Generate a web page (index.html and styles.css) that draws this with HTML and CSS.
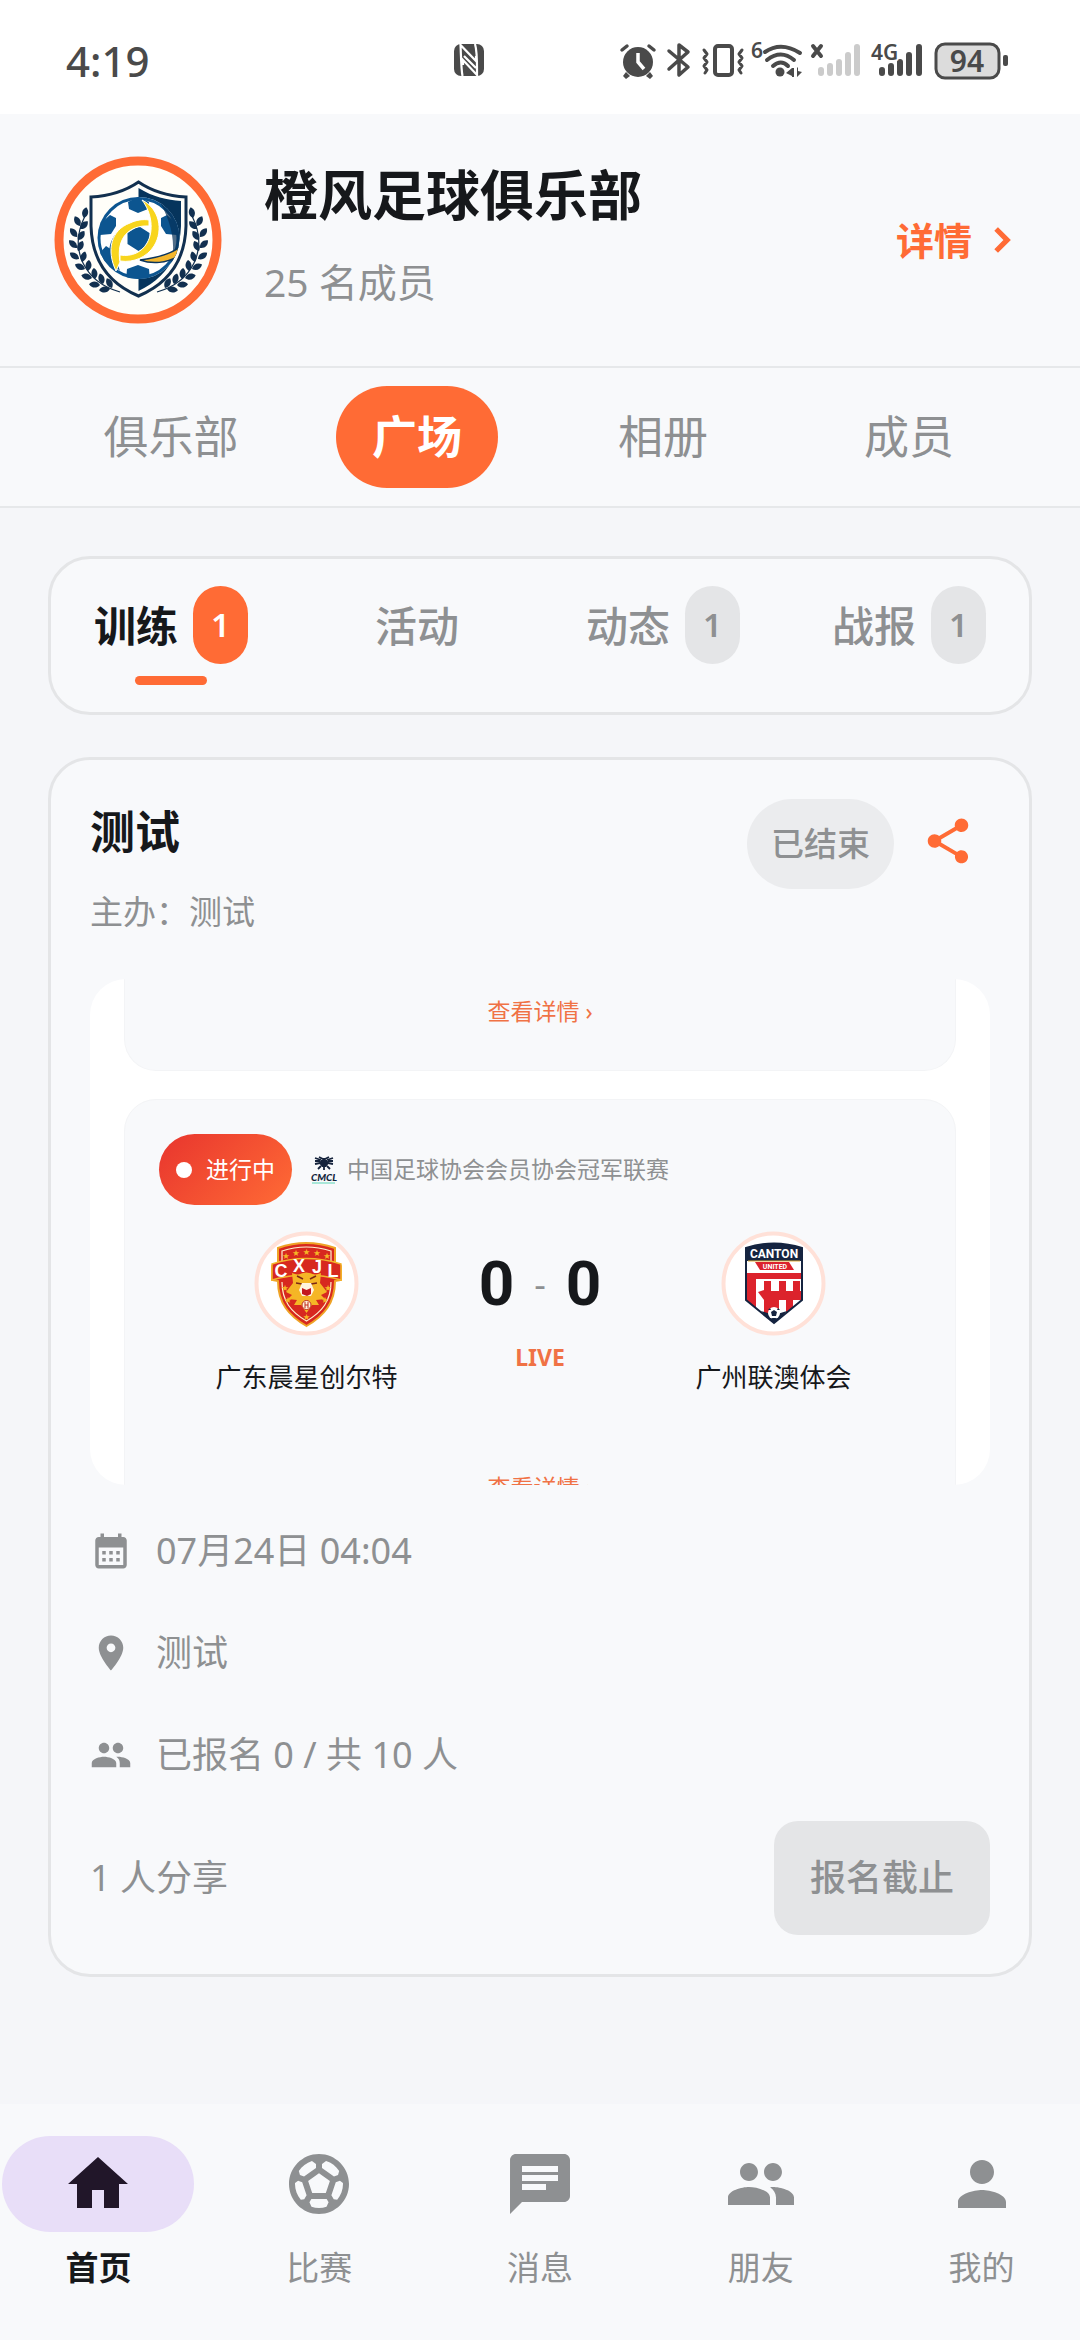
FILE: index.html
```html
<!DOCTYPE html>
<html lang="zh-CN">
<head>
    <meta charset="UTF-8">
    <meta name="viewport" content="width=device-width, initial-scale=1.0">
    <title>橙风足球俱乐部</title>
    <link rel="stylesheet" href="styles.css">
</head>
<body>
    <div class="status-bar">
        <span class="clock">4:19</span>
        <svg class="nfc" width="32" height="32" viewBox="0 0 32 32">
            <rect x="1" y="0" width="30" height="32" rx="7" fill="#4a4a4a"/>
            <path d="M9.500 32 C8 24 8 9 7.500 1 L23 17 V12 M22 0 C24.500 8 24 23 24 31 L10 16 V21 M11 12 L23 24" fill="none" stroke="#fff" stroke-width="2.200"/>
        </svg>
        <div class="status-icons">
            <svg width="392" height="40" viewBox="0 0 392 40">
                <g fill="#4a4a4a" stroke="none">
                    <circle cx="20" cy="22" r="15"/>
                    <path d="M8 32 l4 4 -4 3 -3 -3 z M32 32 l-4 4 4 3 3 -3 z"/>
                    <circle cx="162" cy="32" r="4.500"/>
                    <path d="M174 28 v8 l-6 -3 z M174 28 h2 v9 h-2 z M179 37 v-9 l1 -1 v4 l4 1 z"/>
                </g>
                <path d="M20 13 v9 l6 7" fill="none" stroke="#fff" stroke-width="3.500"/>
                <g fill="none" stroke="#4a4a4a" stroke-width="3.500" stroke-linecap="round" stroke-linejoin="round">
                    <path d="M4 10 l5 -4 M36 10 l-5 -4"/>
                    <path d="M51 11 l19 16 -9 8 V5 l9 7 -19 17"/>
                    <rect x="97" y="6" width="17" height="29" rx="3" stroke-width="4"/>
                    <path d="M86 10 l3 4 -3 4 3 4 -3 4 3 4 -2 3 M124 10 l-3 4 3 4 -3 4 3 4 -3 4 2 3" stroke-width="3"/>
                    <path d="M147 12 Q163 1 182 13 M149 20 Q163 9 176 20 M155 26 Q163 19 170 26" stroke-width="4"/>
                    <path d="M195 6 l8 10 M203 6 l-8 10" stroke-width="4"/>
                </g>
                <g stroke="#cbcbcb" stroke-width="6" stroke-linecap="round">
                    <path d="M203 30 v3 M212 26 v7 M221 22 v11 M230 15 v18 M239 7 v26"/>
                </g>
                <g stroke="#4a4a4a" stroke-width="6" stroke-linecap="round">
                    <path d="M264 30 v3 M273 26 v7 M282 22 v11 M291 15 v18 M301 7 v26"/>
                </g>
                <rect x="318" y="4" width="63" height="34" rx="9" fill="#dcdcdc" stroke="#4a4a4a" stroke-width="3"/>
                <rect x="385" y="15" width="5" height="11" rx="2" fill="#4a4a4a"/>
                <g class="status-text">
                    <text x="133" y="18" font-size="21">6</text>
                    <text x="253" y="20" font-size="21" stroke="#fff" stroke-width="3" paint-order="stroke">4G</text>
                    <text x="349" y="32" font-size="30" text-anchor="middle">94</text>
                </g>
            </svg>
        </div>
    </div>

    <header class="club">
        <svg class="club-logo" viewBox="4 6 168 168" role="img" aria-label="俱乐部徽章">
            <defs>
                <clipPath id="ballClip"><circle cx="88.500" cy="88" r="41"/></clipPath>
                <path id="leaf" d="M0 0 C-4 -3 -4 -8 0 -11 C4 -8 4 -3 0 0z"/>
                <g id="laurel" fill="#12304f">
                    <path d="M35 66 C18 100 35 132 70 142" fill="none" stroke="#12304f" stroke-width="1.200"/>
                    <use href="#leaf" transform="translate(34 68) rotate(12)"/>
                    <use href="#leaf" transform="translate(30 76) rotate(-28)"/>
                    <use href="#leaf" transform="translate(30 79) rotate(45)"/>
                    <use href="#leaf" transform="translate(27 87) rotate(-38)"/>
                    <use href="#leaf" transform="translate(28 90) rotate(35)"/>
                    <use href="#leaf" transform="translate(27 98) rotate(-46)"/>
                    <use href="#leaf" transform="translate(28 101) rotate(26)"/>
                    <use href="#leaf" transform="translate(29 109) rotate(-56)"/>
                    <use href="#leaf" transform="translate(32 112) rotate(16)"/>
                    <use href="#leaf" transform="translate(35 119) rotate(-66)"/>
                    <use href="#leaf" transform="translate(38 121) rotate(5)"/>
                    <use href="#leaf" transform="translate(42 128) rotate(-76)"/>
                    <use href="#leaf" transform="translate(45 129) rotate(-6)"/>
                    <use href="#leaf" transform="translate(50 135) rotate(-86)"/>
                    <use href="#leaf" transform="translate(53 134) rotate(-16)"/>
                    <use href="#leaf" transform="translate(60 139) rotate(-96)"/>
                    <use href="#leaf" transform="translate(62 138) rotate(-28)"/>
                </g>
            </defs>
            <circle cx="88" cy="90" r="79" fill="#fffef9" stroke="#ff6b35" stroke-width="9"/>
            <use href="#laurel"/>
            <use href="#laurel" transform="translate(177 0) scale(-1 1)"/>
            <path d="M88.500 32 C74 42 58 46 41 47 V76 C42 112 60 134 88.500 146 C117 134 135 112 136 76 V47 C119 46 103 42 88.500 32z" fill="#fffef9" stroke="#12304f" stroke-width="3"/>
            <path d="M88.500 38 C103 47 117 50 131 51 V76 C130 107 114 129 88.500 141z" fill="#06345c"/>
            <circle cx="88.500" cy="88" r="41" fill="#fff"/>
            <g clip-path="url(#ballClip)">
                <circle cx="88.500" cy="88" r="40" fill="none" stroke="#0c5590" stroke-width="4"/>
                <path d="M88.500 76 l11 7 v11 l-11 7 -11 -7 v-11z M78 52 l10 -5 11 5 -1 7 -10 4 -9 -4z M50 74 l10 -9 6 3 v8 l-5 8 -11 1z M127 74 l-10 -9 -6 3 v8 l5 8 11 1z M77 119 l11 -4 11 4 1 12 h-24z M56 96 l6 4 3 18 -18 -12z" fill="#0c5590"/>
                <path d="M106 46 C126 55 132 72 131 88 C131 98 127 108 120 116 C127 96 122 70 106 46z" fill="#062f55" opacity=".7"/>
                <path d="M60 112 C57 98 61 86 72 78 C63 94 65 108 70 121z" fill="#0c5590"/>
                <path d="M66 121 C56 100 61 80 80 73 C86 70 93 69 99 70 V76 C79 75 66 88 70 112z" fill="#f8d51d" stroke="#fff" stroke-width="1"/>
                <path d="M92 50 C109 58 114 80 104 96 C97 107 84 113 70 111 V105 C82 107 92 102 97 93 C104 81 102 63 92 50z" fill="#f8d51d" stroke="#fff" stroke-width="1"/>
                <path d="M90 110 C106 108 119 105 130 97 V105 C117 114 101 114 90 110z" fill="#f3b62d" stroke="#0b355c" stroke-width="1.500"/>
            </g>
        </svg>
        <div class="club-info">
            <h1>橙风足球俱乐部</h1>
            <p>25 名成员</p>
        </div>
        <a class="detail-link" href="#detail">详情
            <svg width="48" height="48" viewBox="0 0 24 24"><path d="M10 6 8.590 7.410 13.170 12l-4.580 4.590L10 18l6-6z" stroke="currentColor" stroke-width=".6"/></svg>
        </a>
    </header>

    <nav class="tabs">
        <button type="button">俱乐部</button>
        <button type="button" class="active">广场</button>
        <button type="button">相册</button>
        <button type="button">成员</button>
    </nav>

    <main class="content">
        <div class="card sub-tabs">
            <button type="button" class="active"><span class="sub-label">训练<span class="badge">1</span></span></button>
            <button type="button"><span class="sub-label">活动</span></button>
            <button type="button"><span class="sub-label">动态<span class="badge">1</span></span></button>
            <button type="button"><span class="sub-label">战报<span class="badge">1</span></span></button>
        </div>

        <article class="card event">
            <div class="event-head">
                <div>
                    <h2>测试</h2>
                    <p class="host">主办：测试</p>
                </div>
                <div class="event-actions">
                    <span class="state">已结束</span>
                    <button type="button" class="share" aria-label="分享">
                        <svg width="54" height="54" viewBox="0 0 24 24"><path d="M18 16.080c-.76 0-1.440.3-1.960.77L8.910 12.700c.05-.23.09-.46.09-.7s-.04-.47-.09-.7l7.050-4.110c.54.5 1.250.81 2.040.81 1.660 0 3-1.340 3-3s-1.340-3-3-3-3 1.340-3 3c0 .24.04.47.09.7L8.040 9.810C7.500 9.310 6.790 9 6 9c-1.660 0-3 1.340-3 3s1.340 3 3 3c.79 0 1.500-.31 2.040-.81l7.120 4.160c-.05.21-.08.43-.08.65 0 1.610 1.310 2.920 2.920 2.920s2.920-1.310 2.920-2.920-1.310-2.920-2.920-2.920z"/></svg>
                    </button>
                </div>
            </div>

            <div class="preview">
                <div class="match match-prev"><a class="more" href="#match">查看详情 ›</a></div>
                <div class="match">
                    <div class="match-head">
                        <span class="live-pill"><i class="dot"></i>进行中</span>
                        <svg width="28" height="28" viewBox="0 0 28 28">
                            <g fill="none" stroke="#15233c" stroke-width="1.800">
                                <path d="M5 2 l6 2 M23 2 l-6 2 M5 8 l5 -1 M23 8 l-5 -1 M8 13 l3 -3 M20 13 l-3 -3 M14 10 v4"/>
                                <path d="M9 1 l4 2 h2 l4 -2 M5 5 h5 M18 5 h5"/>
                            </g>
                            <path d="M11 4 h6 l2 3 -3 4 h-4 l-3 -4z" fill="#15233c"/>
                            <path d="M2 27 h23" stroke="#a9e7d8" stroke-width="2"/>
                            <text x="14" y="25" text-anchor="middle" font-size="10" font-weight="900" font-style="italic" font-family="Lato, sans-serif" fill="#13253b">CMCL</text>
                        </svg>
                        <span class="league">中国足球协会会员协会冠军联赛</span>
                    </div>
                    <div class="versus">
                        <div class="team">
                            <svg width="105" height="105" viewBox="0 0 105 105">
                                <circle cx="52.500" cy="52.500" r="50" fill="#fff" stroke="#ffe1d8" stroke-width="4"/>
                                <path d="M24 17 Q52 7 81 17 V32 L87 35 V49 L81 50 C81 72 70 85 52.500 95 C35 85 24 72 24 50 L18 49 V35 L24 32z" fill="#d7281f" stroke="#efa326" stroke-width="2"/>
                                <path d="M28 31 V20 Q52 12 77 20 V31 M28 51 C28 70 37 81 52.500 90 C68 81 77 70 77 51" fill="none" stroke="#fff0d0" stroke-width="1.200"/>
                                <path d="M18 33 Q52 22 87 33 V49 Q52 39 18 49z" fill="#d7281f" stroke="#f3b42c" stroke-width="1.500"/>
                                <path d="M38 42 L44 44 Q52 39 61 44 L67 42 L66 52 L73 61 L67 64 L71 68 L62 69 L65 74 L58 74 L52.500 82 L47 74 L40 74 L43 69 L34 68 L38 64 L32 61 L39 52z" fill="#f5b626"/>
                                <path d="M43 45 l6 3 M62 45 l-6 3 M42 52 l6 1 M63 52 l-6 1" stroke="#7c2816" stroke-width="1.600"/>
                                <path d="M48 52 h9 l3 7 -3 6 h-9 l-3 -6z" fill="#fff4df"/>
                                <path d="M48 57 l4.500 2 4.500 -2 v6 l-4 2 -5 -2z" fill="#c31920"/>
                                <circle cx="52.500" cy="74" r="4.500" fill="#fff1dc" stroke="#bd2b1c"/>
                                <path d="M51 71 v6 M51 74 h3 M54 71 v6" stroke="#bd2b1c" stroke-width="1"/>
                                <g fill="#f5b626" font-size="7" text-anchor="middle">
                                    <text x="32" y="27">★</text><text x="42" y="24">★</text><text x="52.500" y="23">★</text><text x="63" y="24">★</text><text x="73" y="27">★</text>
                                    <text x="31" y="59">★</text><text x="74" y="59">★</text><text x="34" y="71">★</text><text x="71" y="71">★</text><text x="52.500" y="88">★</text>
                                </g>
                                <g class="crest-text" font-size="18" text-anchor="middle">
                                    <text x="27" y="46">C</text><text x="45" y="41">X</text><text x="63" y="42">J</text><text x="79" y="46">L</text>
                                </g>
                            </svg>
                            <span>广东晨星创尔特</span>
                        </div>
                        <div class="score">
                            <div class="score-line"><b>0</b><span>-</span><b>0</b></div>
                            <strong>LIVE</strong>
                        </div>
                        <div class="team">
                            <svg width="105" height="105" viewBox="0 0 105 105">
                                <defs><clipPath id="cantonClip"><path d="M25 17 Q53 8 81 17 V69 L53 92 L25 69z"/></clipPath></defs>
                                <circle cx="52.500" cy="52.500" r="50" fill="#fff" stroke="#ffe1d8" stroke-width="4"/>
                                <g clip-path="url(#cantonClip)">
                                    <rect x="25" y="8" width="56" height="86" fill="#fff"/>
                                    <rect x="25" y="8" width="56" height="22" fill="#152440"/>
                                    <path d="M27 30 h52" stroke="#e4b03a" stroke-width="1"/>
                                    <path d="M34 31 h34 l5 8 H39z" fill="#dc232c"/>
                                    <path d="M26 42 h54 v6 H35 v28 h-9z M43 50 h7 v10 h8 V50 h7 v10 h7 V50 h7 v10 h2 v9 H72 v16 h-7 V69 h-7 v16 h-8 V69 h-7 l-6 -8 6 -2z M43 67 h7 v20 h-7z" fill="#dc232c"/>
                                    <path d="M40 80 l13 4 13 -4 -13 14z" fill="#152440"/>
                                </g>
                                <path d="M25 17 Q53 8 81 17 V69 L53 92 L25 69z" fill="none" stroke="#152440" stroke-width="2"/>
                                <circle cx="53" cy="82" r="6" fill="#fff"/>
                                <path d="M53 79 l3 2 -1 4 h-4 l-1 -4z M47 79 l2 -2 1 2z M59 79 l-2 -2 -1 2z M50 87 h6 l-3 2z" fill="#152440"/>
                                <text class="crest-name" x="53" y="27" font-size="12" text-anchor="middle">CANTON</text>
                                <text class="crest-name" x="54" y="38" font-size="7" text-anchor="middle">UNITED</text>
                            </svg>
                            <span>广州联澳体会</span>
                        </div>
                    </div>
                    <a class="more" href="#match">查看详情 ›</a>
                </div>
            </div>

            <ul class="info">
                <li><svg viewBox="0 0 24 24"><path d="M19 4h-1V2h-2v2H8V2H6v2H5c-1.110 0-1.990.9-1.990 2L3 20c0 1.100.89 2 2 2h14c1.100 0 2-.9 2-2V6c0-1.100-.9-2-2-2zm0 16H5V10h14v10zM9 14H7v-2h2v2zm4 0h-2v-2h2v2zm4 0h-2v-2h2v2zm-8 4H7v-2h2v2zm4 0h-2v-2h2v2zm4 0h-2v-2h2v2z"/></svg>07月24日 04:04</li>
                <li><svg viewBox="0 0 24 24"><path d="M12 2C8.130 2 5 5.130 5 9c0 5.250 7 13 7 13s7-7.750 7-13c0-3.870-3.130-7-7-7zm0 9.500c-1.380 0-2.500-1.120-2.500-2.500s1.120-2.500 2.500-2.500 2.500 1.120 2.500 2.500-1.120 2.500-2.500 2.500z"/></svg>测试</li>
                <li><svg viewBox="0 0 24 24"><path d="M16 11c1.660 0 2.990-1.340 2.990-3S17.660 5 16 5s-3 1.340-3 3 1.340 3 3 3zm-8 0c1.660 0 2.990-1.340 2.990-3S9.660 5 8 5 5 6.340 5 8s1.340 3 3 3zm0 2c-2.330 0-7 1.170-7 3.500V19h14v-2.500c0-2.330-4.670-3.500-7-3.500zm8 0c-.29 0-.62.02-.97.05 1.160.84 1.970 1.970 1.970 3.450V19h6v-2.500c0-2.330-4.670-3.500-7-3.500z"/></svg>已报名 0 / 共 10 人</li>
            </ul>

            <div class="event-foot">
                <span>1 人分享</span>
                <button type="button" disabled>报名截止</button>
            </div>
        </article>
    </main>

    <nav class="bottom-nav">
        <a href="#home" class="active">
            <span class="nav-icon"><svg viewBox="0 0 24 24"><path d="M10 20v-6h4v6h5v-8h3L12 3 2 12h3v8z"/></svg></span>首页
        </a>
        <a href="#match">
            <span class="nav-icon"><svg viewBox="0 0 24 24"><path d="M12 2C6.480 2 2 6.480 2 12s4.480 10 10 10 10-4.480 10-10S17.520 2 12 2zm1 3.300l1.350-.95c1.820.56 3.370 1.760 4.380 3.340l-.39 1.340-1.350.46L13 6.700V5.300zm-3.350-.95L11 5.300v1.400L7.010 9.490l-1.350-.46-.39-1.340c1.010-1.570 2.560-2.770 4.380-3.340zM7.080 17.110l-1.140.1C4.730 15.810 4 13.990 4 12c0-.12.01-.23.02-.35l1-.73 1.380.48 1.460 4.340-.78 1.370zm7.420 2.480c-.79.26-1.630.41-2.500.41s-1.710-.15-2.500-.41l-.69-1.490.64-1.100h5.110l.64 1.110-.7 1.480zM14.270 15H9.730l-1.350-4.020L12 8.440l3.630 2.540L14.270 15zm3.790 2.210l-1.140-.1-.79-1.370 1.460-4.340 1.390-.47 1 .73c.01.11.02.22.02.34 0 1.990-.73 3.810-1.940 5.210z"/></svg></span>比赛
        </a>
        <a href="#message">
            <span class="nav-icon"><svg viewBox="0 0 24 24"><path d="M20 2H4c-1.100 0-1.990.9-1.990 2L2 22l4-4h14c1.100 0 2-.9 2-2V4c0-1.100-.9-2-2-2zM6 9h12v2H6V9zm8 5H6v-2h8v2zm4-6H6V6h12v2z"/></svg></span>消息
        </a>
        <a href="#friends">
            <span class="nav-icon"><svg viewBox="0 0 24 24"><path d="M16 11c1.660 0 2.990-1.340 2.990-3S17.660 5 16 5s-3 1.340-3 3 1.340 3 3 3zm-8 0c1.660 0 2.990-1.340 2.990-3S9.660 5 8 5 5 6.340 5 8s1.340 3 3 3zm0 2c-2.330 0-7 1.170-7 3.500V19h14v-2.500c0-2.330-4.670-3.500-7-3.500zm8 0c-.29 0-.62.02-.97.05 1.160.84 1.970 1.970 1.970 3.450V19h6v-2.500c0-2.330-4.670-3.500-7-3.500z"/></svg></span>朋友
        </a>
        <a href="#me">
            <span class="nav-icon"><svg viewBox="0 0 24 24"><path d="M12 12c2.210 0 4-1.790 4-4s-1.790-4-4-4-4 1.790-4 4 1.790 4 4 4zm0 2c-2.670 0-8 1.340-8 4v2h16v-2c0-2.660-5.330-4-8-4z"/></svg></span>我的
        </a>
    </nav>
</body>
</html>
```
FILE: styles.css
```css
* {
    box-sizing: border-box;
}

body {
    margin: 0;
    min-height: 100vh;
    display: flex;
    flex-direction: column;
    background: #f5f6f9;
    color: #16181b;
    font-family: "Noto Sans", "Noto Sans CJK SC", sans-serif;
    line-height: 1.5;
}

h1, h2, p, ul {
    margin: 0;
    padding: 0;
}

button {
    border: none;
    padding: 0;
    background: none;
    color: inherit;
    font-family: inherit;
    line-height: inherit;
}

a {
    color: inherit;
    text-decoration: none;
}

svg {
    display: block;
    flex: none;
    fill: currentColor;
    overflow: visible;
}

/* status bar */
.status-bar {
    display: grid;
    grid-template-columns: 41% auto 1fr;
    align-items: center;
    height: 114px;
    padding: 6px 70px 0 66px;
    background: #fff;
}

.clock {
    font-size: 42px;
    font-weight: 500;
    color: #4a4a4a;
}

.status-icons {
    display: flex;
    justify-content: flex-end;
}

.status-text {
    font-weight: 600;
    fill: #4a4a4a;
}

/* club header */
.club {
    display: flex;
    align-items: center;
    gap: 42px;
    padding: 42px 54px;
    background: #f8f9fb;
    border-bottom: 2px solid #e6e8ea;
}

.club-logo {
    width: 168px;
    height: 168px;
}

.club-info {
    flex: 1;
    display: flex;
    flex-direction: column;
    gap: 12px;
}

.club-info h1 {
    font-size: 54px;
    line-height: 72px;
    font-weight: 700;
}

.club-info p {
    font-size: 39px;
    line-height: 78px;
    color: #8e9092;
}

.detail-link {
    display: flex;
    align-items: center;
    gap: 6px;
    font-size: 38px;
    font-weight: 700;
    color: #ff6b35;
}

/* tabs */
.tabs {
    display: grid;
    grid-template-columns: repeat(4, 1fr);
    justify-items: center;
    padding: 18px 48px;
    background: #f8f9fb;
    border-bottom: 2px solid #e6e8ea;
}

.tabs button {
    padding: 0 36px;
    border-radius: 51px;
    font-size: 45px;
    line-height: 102px;
    color: #8e9092;
}

.tabs .active {
    background: #ff6b35;
    color: #fff;
    font-weight: 700;
}

.content {
    flex: 1;
    display: flex;
    flex-direction: column;
    gap: 42px;
    padding: 48px;
}

.card {
    background: #f8f9fb;
    border: 3px solid #e4e5e7;
    border-radius: 42px;
}

.sub-tabs {
    display: grid;
    grid-template-columns: repeat(4, 1fr);
    column-gap: 6px;
    padding: 27px 0;
}

.sub-tabs button {
    display: flex;
    flex-direction: column;
    align-items: center;
    gap: 12px;
    font-size: 42px;
    font-weight: 500;
    color: #8e9092;
}

.sub-tabs button::after {
    content: "";
    width: 72px;
    height: 9px;
    border-radius: 5px;
}

.sub-label {
    display: flex;
    align-items: center;
    gap: 15px;
    height: 78px;
}

.badge {
    display: flex;
    align-items: center;
    justify-content: center;
    width: 55px;
    height: 78px;
    border-radius: 28px;
    background: #e4e5e7;
    font-size: 33px;
    font-weight: 600;
}

.sub-tabs .active {
    color: #16181b;
    font-weight: 700;
}

.sub-tabs .active::after {
    background: #ff6b35;
}

.sub-tabs .active .badge {
    background: #ff6b35;
    color: #fff;
}

/* event card */
.event {
    padding: 39px;
}

.event-head {
    display: flex;
    justify-content: space-between;
    margin-bottom: 45px;
}

.event h2 {
    font-size: 45px;
    line-height: 66px;
    font-weight: 700;
}

.host {
    margin-top: 24px;
    font-size: 33px;
    line-height: 45px;
    color: #8e9092;
}

.event-actions {
    display: flex;
    align-items: flex-start;
    gap: 12px;
}

.state {
    padding: 0 24px;
    border-radius: 45px;
    background: #ebecee;
    font-size: 33px;
    font-weight: 500;
    line-height: 90px;
    color: #8e9092;
}

.share {
    padding: 15px;
    color: #ff6b35;
}

.preview {
    display: flex;
    flex-direction: column;
    gap: 28px;
    aspect-ratio: 16 / 9;
    padding: 0 34px;
    border-radius: 36px;
    background: #fff;
    overflow: hidden;
}

.match {
    flex: none;
    height: 480px;
    padding: 34px;
    background: #f8f9fb;
    border: 1px solid #f3f4f6;
    border-radius: 32px;
}

.match-prev {
    height: 92px;
    padding: 14px;
    border-top: none;
    border-radius: 0 0 32px 32px;
}

.more {
    display: block;
    font-size: 23px;
    line-height: 36px;
    text-align: center;
    color: #f07245;
}

.match-head {
    display: flex;
    align-items: center;
    gap: 9px;
}

.live-pill {
    display: flex;
    align-items: center;
    gap: 14px;
    height: 71px;
    margin-right: 9px;
    padding: 0 17px;
    border-radius: 36px;
    background: linear-gradient(135deg, #e8352e, #ff6b35);
    font-size: 23px;
    color: #fff;
}

.dot {
    width: 16px;
    height: 16px;
    border-radius: 50%;
    background: #fff;
}

.league {
    font-size: 23px;
    color: #8e9092;
}

.versus {
    display: grid;
    grid-template-columns: 1fr 172px 1fr;
    margin: 26px 0 73px;
}

.team {
    display: flex;
    flex-direction: column;
    align-items: center;
    gap: 22px;
    font-size: 26px;
    line-height: 38px;
}

.score {
    display: flex;
    flex-direction: column;
    align-items: center;
    gap: 24px;
    padding-top: 20px;
}

.score-line {
    display: flex;
    align-items: center;
    gap: 20px;
    font-family: Roboto, sans-serif;
    font-size: 62px;
    line-height: 66px;
}

.score-line span {
    font-family: "Noto Sans", sans-serif;
    font-size: 36px;
    color: #8e9092;
}

.score strong {
    font-size: 23px;
    line-height: 32px;
    color: #f07245;
}

.crest-text {
    font-family: "Liberation Sans", sans-serif;
    font-weight: 700;
    fill: #fff;
}

.crest-name {
    font-family: Roboto, sans-serif;
    font-weight: 700;
    fill: #fff;
}

.info {
    display: flex;
    flex-direction: column;
    gap: 48px;
    margin: 39px 0;
    list-style: none;
    font-size: 36px;
    line-height: 54px;
    color: #8e9092;
}

.info li {
    display: flex;
    align-items: center;
    gap: 24px;
}

.info svg {
    width: 42px;
    height: 42px;
}

.event-foot {
    display: flex;
    align-items: center;
    justify-content: space-between;
    font-size: 36px;
    color: #8e9092;
}

.event-foot button {
    padding: 0 36px;
    border-radius: 24px;
    background: #e4e5e7;
    font-size: 36px;
    line-height: 114px;
    font-weight: 500;
}

/* bottom navigation */
.bottom-nav {
    display: grid;
    grid-template-columns: repeat(5, 1fr);
    gap: 24px;
    height: 236px;
    padding-top: 32px;
    background: #f8f9fb;
}

.bottom-nav a {
    display: flex;
    flex-direction: column;
    align-items: center;
    gap: 12px;
    font-size: 33px;
    line-height: 48px;
    color: #8e9092;
}

.nav-icon {
    display: flex;
    align-items: center;
    justify-content: center;
    width: 192px;
    height: 96px;
    border-radius: 48px;
}

.nav-icon svg {
    width: 72px;
    height: 72px;
}

.bottom-nav .active {
    color: #16181b;
    font-weight: 700;
}

.active .nav-icon {
    background: #e8def8;
    color: #211629;
}
```
